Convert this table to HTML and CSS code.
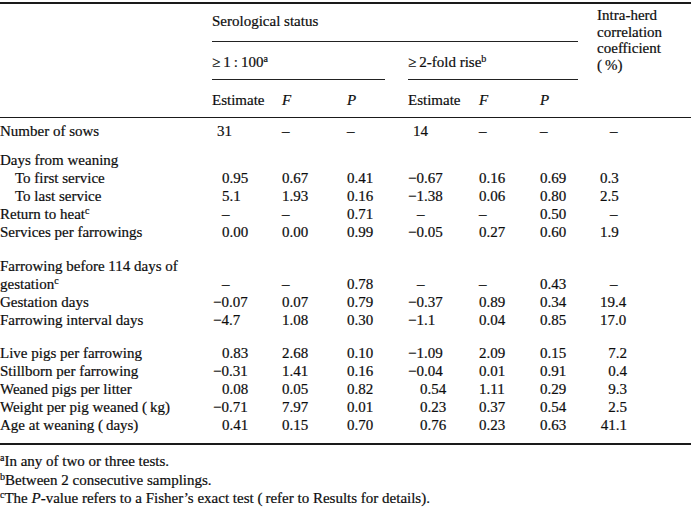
FILE: index.html
```html
<!DOCTYPE html>
<html lang="en">
<head>
<meta charset="utf-8">
<title>Serological status table</title>
<link rel="stylesheet" href="styles.css">
</head>
<body>
<table class="tbl">
  <colgroup>
    <col class="w-lab"><col class="w-e1"><col class="w-f1"><col class="w-p1"><col class="w-e2"><col class="w-f2"><col class="w-p2"><col class="w-ih">
  </colgroup>
  <thead>
    <tr>
      <th class="lab"></th>
      <th colspan="6"><div class="hrule r-all">Serological status</div></th>
      <th rowspan="3"><div class="intra-h">Intra-herd<br>correlation<br>coefficient<br>(&thinsp;%)</div></th>
    </tr>
    <tr>
      <th class="lab"></th>
      <th colspan="3"><div class="hrule r-1">&ge;&thinsp;1&thinsp;:&thinsp;100<sup>a</sup></div></th>
      <th colspan="3"><div class="hrule r-2">&ge;&thinsp;2-fold rise<sup>b</sup></div></th>
    </tr>
    <tr>
      <th><div class="hcol"></div></th>
      <th><div class="hcol">Estimate</div></th>
      <th><div class="hcol"><i>F</i></div></th>
      <th><div class="hcol"><i>P</i></div></th>
      <th><div class="hcol">Estimate</div></th>
      <th><div class="hcol"><i>F</i></div></th>
      <th><div class="hcol"><i>P</i></div></th>
    </tr>
  </thead>
  <tbody>
    <tr class="first">
      <td>Number of sows</td><td class="e1"><span class="int">31</span></td><td>–</td><td>–</td><td class="e2"><span class="int">14</span></td><td>–</td><td>–</td><td class="ih"><span class="dash">–</span></td>
    </tr>
    <tr class="sep-s">
      <td>Days from weaning</td><td></td><td></td><td></td><td></td><td></td><td></td><td></td>
    </tr>
    <tr>
      <td class="ind">To first service</td><td class="e1">0.95</td><td>0.67</td><td>0.41</td><td class="e2"><span class="neg">−0.67</span></td><td>0.16</td><td>0.69</td><td class="ih">0.3</td>
    </tr>
    <tr>
      <td class="ind">To last service</td><td class="e1">5.1</td><td>1.93</td><td>0.16</td><td class="e2"><span class="neg">−1.38</span></td><td>0.06</td><td>0.80</td><td class="ih">2.5</td>
    </tr>
    <tr>
      <td>Return to heat<sup>c</sup></td><td class="e1">–</td><td>–</td><td>0.71</td><td class="e2"><span class="dash2">–</span></td><td>–</td><td>0.50</td><td class="ih"><span class="dash">–</span></td>
    </tr>
    <tr>
      <td>Services per farrowings</td><td class="e1">0.00</td><td>0.00</td><td>0.99</td><td class="e2"><span class="neg">−0.05</span></td><td>0.27</td><td>0.60</td><td class="ih">1.9</td>
    </tr>
    <tr class="sep-m">
      <td>Farrowing before 114 days of</td><td></td><td></td><td></td><td></td><td></td><td></td><td></td>
    </tr>
    <tr>
      <td>gestation<sup>c</sup></td><td class="e1">–</td><td>–</td><td>0.78</td><td class="e2"><span class="dash2">–</span></td><td>–</td><td>0.43</td><td class="ih"><span class="dash">–</span></td>
    </tr>
    <tr>
      <td>Gestation days</td><td class="e1"><span class="neg">−0.07</span></td><td>0.07</td><td>0.79</td><td class="e2"><span class="neg">−0.37</span></td><td>0.89</td><td>0.34</td><td class="ih">19.4</td>
    </tr>
    <tr>
      <td>Farrowing interval days</td><td class="e1"><span class="neg">−4.7</span></td><td>1.08</td><td>0.30</td><td class="e2"><span class="neg">−1.1</span></td><td>0.04</td><td>0.85</td><td class="ih">17.0</td>
    </tr>
    <tr class="sep-l">
      <td>Live pigs per farrowing</td><td class="e1">0.83</td><td>2.68</td><td>0.10</td><td class="e2"><span class="neg">−1.09</span></td><td>2.09</td><td>0.15</td><td class="ih r">7.2</td>
    </tr>
    <tr>
      <td>Stillborn per farrowing</td><td class="e1"><span class="neg">−0.31</span></td><td>1.41</td><td>0.16</td><td class="e2"><span class="neg">−0.04</span></td><td>0.01</td><td>0.91</td><td class="ih r">0.4</td>
    </tr>
    <tr>
      <td>Weaned pigs per litter</td><td class="e1">0.08</td><td>0.05</td><td>0.82</td><td class="e2">0.54</td><td>1.11</td><td>0.29</td><td class="ih r">9.3</td>
    </tr>
    <tr>
      <td>Weight per pig weaned (&thinsp;kg)</td><td class="e1"><span class="neg">−0.71</span></td><td>7.97</td><td>0.01</td><td class="e2">0.23</td><td>0.37</td><td>0.54</td><td class="ih r">2.5</td>
    </tr>
    <tr class="last">
      <td>Age at weaning (&thinsp;days)</td><td class="e1">0.41</td><td>0.15</td><td>0.70</td><td class="e2">0.76</td><td>0.23</td><td>0.63</td><td class="ih r">41.1</td>
    </tr>
  </tbody>
</table>
<div class="notes">
  <p><sup>a</sup>In any of two or three tests.</p>
  <p><sup>b</sup>Between 2 consecutive samplings.</p>
  <p><sup>c</sup>The <i>P</i>-value refers to a Fisher’s exact test (&thinsp;refer to Results for details).</p>
</div>
</body>
</html>
```

FILE: styles.css
```css
html, body {
  margin: 0;
  background: #ffffff;
}

body {
  color: #0d0d0d;
  font-family: "Liberation Serif", "Times New Roman", serif;
  font-size: 15px;
  width: 691px;
  -webkit-text-stroke: 0.2px #0d0d0d;
}

.tbl {
  width: 691px;
  table-layout: fixed;
  border-collapse: separate;
  border-spacing: 0;
  margin-top: 2px;
  border-top: 2px solid #1a1a1a;
  border-bottom: 2px solid #1a1a1a;
}

.w-lab { width: 212px; }
.w-e1 { width: 70px; }
.w-f1 { width: 65px; }
.w-p1 { width: 61px; }
.w-e2 { width: 71px; }
.w-f2 { width: 61px; }
.w-p2 { width: 57px; }
.w-ih { width: 94px; }

th, td {
  padding: 0;
  text-align: left;
  font-weight: normal;
  vertical-align: top;
  white-space: nowrap;
}

sup {
  font-size: 10px;
  line-height: 0;
  vertical-align: 5px;
}

/* header */
.hrule {
  box-sizing: border-box;
  height: 38px;
  line-height: 18px;
  border-bottom: 1px solid #222222;
}

.r-all {
  padding-top: 8px;
  margin-right: 19px;
}

.r-1 {
  padding-top: 11px;
  margin-right: 23px;
}

.r-2 {
  padding-top: 11px;
  margin-right: 19px;
}

.hcol {
  box-sizing: border-box;
  height: 38px;
  line-height: 18px;
  padding-top: 11px;
  border-bottom: 1px solid #1a1a1a;
}

.intra-h {
  box-sizing: border-box;
  height: 114px;
  padding-top: 3px;
  line-height: 16.5px;
  border-bottom: 1px solid #1a1a1a;
}

/* body */
tbody td {
  line-height: 18px;
}

tr.first td { padding-top: 4px; }
tr.sep-s td { padding-top: 11px; }
tr.sep-m td { padding-top: 16px; }
tr.sep-l td { padding-top: 15px; }
tr.last td { padding-bottom: 9px; }

td.ind { padding-left: 15px; }

td.e1 { padding-left: 10px; }
td.e1 .neg { margin-left: -9px; }
td.e1 .int { margin-left: -5px; }

td.e2 { padding-left: 12px; }
td.e2 .neg { margin-left: -12px; }
td.e2 .int { margin-left: -7px; }
td.e2 .dash2 { margin-left: -3px; }

td.ih { padding-left: 3px; }
td.ih .dash { margin-left: 10px; }
td.ih.r {
  padding-left: 0;
  padding-right: 64px;
  text-align: right;
}

/* footnotes */
.notes {
  margin-top: 7px;
  line-height: 18.5px;
}

.notes p {
  margin: 0;
}
```
